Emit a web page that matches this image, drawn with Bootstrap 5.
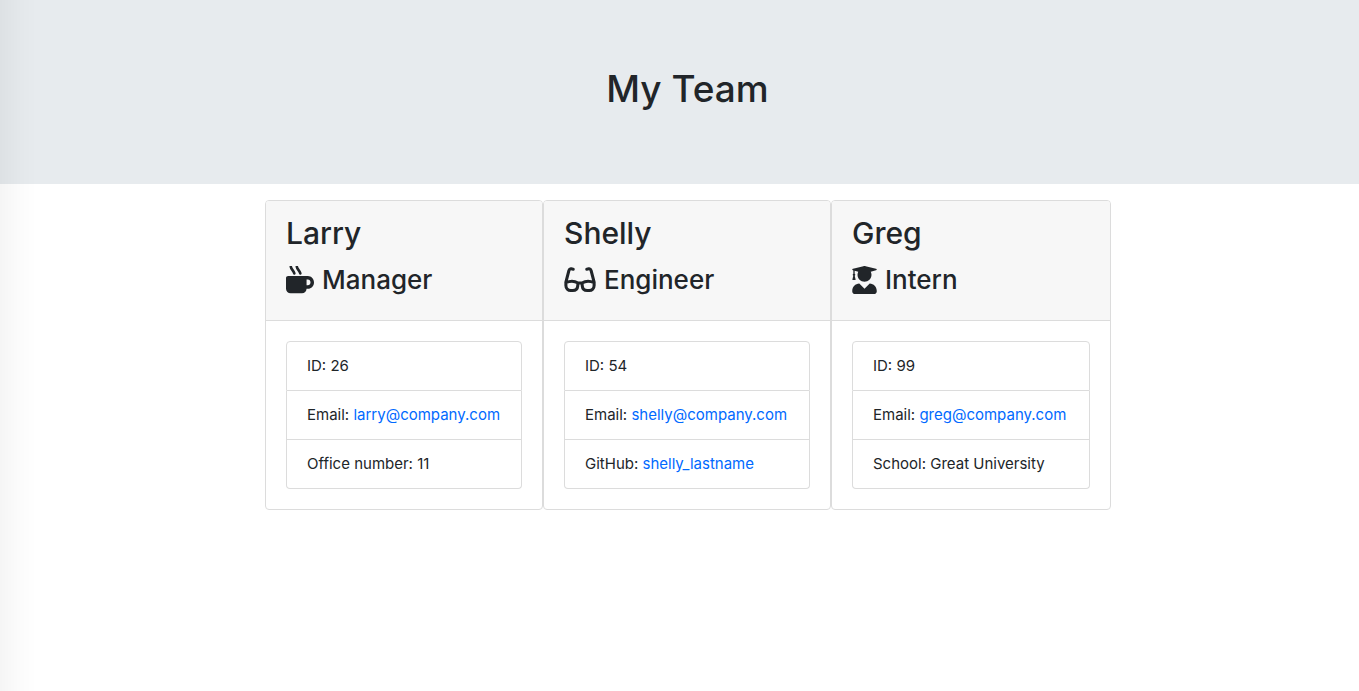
<!DOCTYPE html>
<html lang="en">
<head>
<meta charset="utf-8">
<meta name="viewport" content="width=device-width, initial-scale=1">
<title>My Team</title>
<link href="https://cdn.jsdelivr.net/npm/bootstrap@5.3.0/dist/css/bootstrap.min.css" rel="stylesheet">
<style>
  body { font-family: Inter, "Liberation Sans", sans-serif; color: #212529; }
  .team-banner { background: #e7ebee; padding: 65px 32px 71px 48px; }
  .team-banner h1 { font-size: 37px; line-height: 48px; font-weight: 500; }
  .team-list { padding: 16px 0 0 17px; }
  .member { --bs-card-border-color: #dcdcdc; --bs-card-cap-bg: #f7f7f7; --bs-card-border-radius: 4px; --bs-card-inner-border-radius: 3px; min-width: 280px; }
  .member-manager { min-width: 278px; }
  .member-engineer { min-width: 288px; }
  .member .card-header { padding: 12px 20px; }
  .member .card-body { padding: 20px; }
  .member h2 { font-size: 30px; line-height: 40px; margin-bottom: 7px; }
  .member h3 { font-size: 26px; line-height: 40px; margin-bottom: 8px; gap: 8px; }
  .member svg { height: 28px; fill: currentColor; }
  .member .list-group { --bs-list-group-border-radius: 4px; --bs-list-group-border-color: #dcdcdc; }
  .member .list-group-item { padding: 12px 20px; font-size: 15px; line-height: 24px; }
  .member a { color: #0069ff; text-decoration: none; }
  .edge-shade { width: 36px; background: linear-gradient(to right, rgba(0,0,0,.04), rgba(0,0,0,.01) 60%, rgba(0,0,0,0)); pointer-events: none; }
</style>
</head>
<body>
<div class="edge-shade position-fixed top-0 bottom-0 start-0"></div>
<header class="team-banner text-center"><h1 class="mb-0">My Team</h1></header>
<main class="team-list d-flex flex-wrap justify-content-center">
  <section class="card member member-manager">
    <div class="card-header"><h2>Larry</h2>
      <h3 class="d-flex align-items-center"><svg viewBox="0 0 512 512" width="28" aria-hidden="true"><path d="M400 184H40c-22 0-40 14-40 36v196c0 48 38 82 84 82h208c46 0 84-34 84-82h24c62 0 112-54 112-116s-50-116-112-116zm0 168h-24V248h24c27 0 48 24 48 52s-21 52-48 52z"/><path d="M88 14c10 56 50 66 64 122M198 14c10 56 50 66 64 122" fill="none" stroke="currentColor" stroke-width="48" stroke-linecap="round"/></svg>Manager</h3></div>
    <div class="card-body"><ul class="list-group">
      <li class="list-group-item">ID: 26</li>
      <li class="list-group-item">Email: <a href="mailto:larry@company.com">larry@company.com</a></li>
      <li class="list-group-item">Office number: 11</li></ul></div>
  </section>
  <section class="card member member-engineer">
    <div class="card-header"><h2>Shelly</h2>
      <h3 class="d-flex align-items-center"><svg viewBox="0 0 576 512" width="32" aria-hidden="true"><path d="M164 58l-36-6c-22-3-36 8-42 28L30 296v62c0 52 38 90 90 90h36c50 0 86-32 90-80l6-58M412 58l36-6c22-3 36 8 42 28l56 216v62c0 52-38 90-90 90h-36c-50 0-86-32-90-80l-6-58M30 306c70-34 158-34 222 4h72c64-38 152-38 222-4" fill="none" stroke="currentColor" stroke-width="56" stroke-linecap="round" stroke-linejoin="round"/></svg>Engineer</h3></div>
    <div class="card-body"><ul class="list-group">
      <li class="list-group-item">ID: 54</li>
      <li class="list-group-item">Email: <a href="mailto:shelly@company.com">shelly@company.com</a></li>
      <li class="list-group-item">GitHub: <a href="https://github.com/shelly_lastname">shelly_lastname</a></li></ul></div>
  </section>
  <section class="card member">
    <div class="card-header"><h2>Greg</h2>
      <h3 class="d-flex align-items-center"><svg viewBox="0 0 448 512" width="25" aria-hidden="true"><path d="M319.400 320.600L224 416l-95.400-95.400C57.100 323.700 0 382.200 0 454.400v9.600c0 26.500 21.500 48 48 48h352c26.500 0 48-21.500 48-48v-9.600c0-72.200-57.100-130.700-128.600-133.800zM13.600 79.800l6.400 1.500v58.400c-7 4.200-12 11.500-12 20.300 0 8.400 4.600 15.400 11.100 19.700L3.500 242c-1.700 6.900 2.100 14 7.600 14h41.800c5.500 0 9.300-7.100 7.600-14l-15.600-62.300C51.400 175.400 56 168.400 56 160c0-8.800-5-16.100-12-20.300V87.100l66 15.900c-8.600 17.200-14 36.400-14 57 0 70.700 57.300 128 128 128s128-57.300 128-128c0-20.600-5.300-39.800-14-57l96.300-23.200c18.200-4.400 18.200-27.100 0-31.500l-190.400-46c-13-3.100-26.700-3.100-39.700 0L13.600 48.200c-18.100 4.400-18.100 27.200 0 31.600z"/></svg>Intern</h3></div>
    <div class="card-body"><ul class="list-group">
      <li class="list-group-item">ID: 99</li>
      <li class="list-group-item">Email: <a href="mailto:greg@company.com">greg@company.com</a></li>
      <li class="list-group-item">School: Great University</li></ul></div>
  </section>
</main>
<script src="https://cdn.jsdelivr.net/npm/bootstrap@5.3.0/dist/js/bootstrap.bundle.min.js"></script>
</body>
</html>
